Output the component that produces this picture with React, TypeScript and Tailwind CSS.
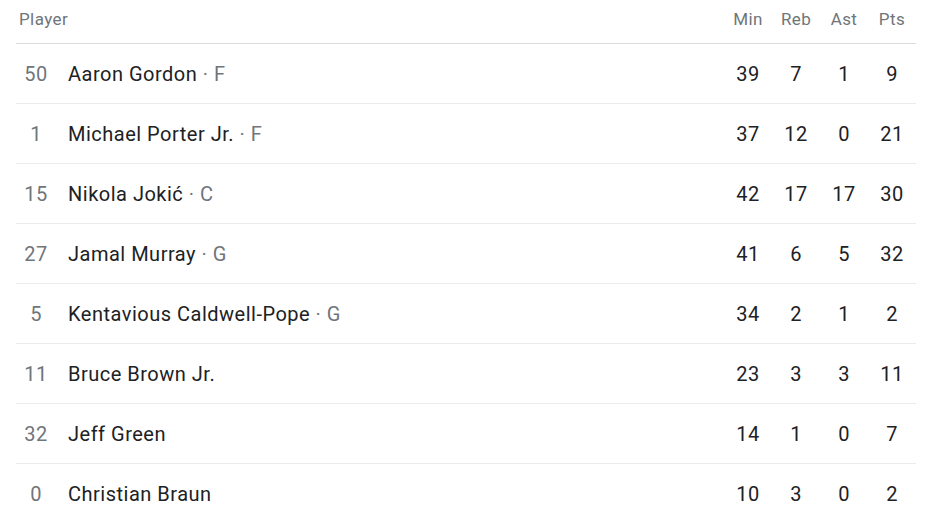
const players = [
  { num: '50', name: 'Aaron Gordon', pos: 'F', min: 39, reb: 7, ast: 1, pts: 9 },
  { num: '1', name: 'Michael Porter Jr.', pos: 'F', min: 37, reb: 12, ast: 0, pts: 21 },
  { num: '15', name: 'Nikola Jokić', pos: 'C', min: 42, reb: 17, ast: 17, pts: 30 },
  { num: '27', name: 'Jamal Murray', pos: 'G', min: 41, reb: 6, ast: 5, pts: 32 },
  { num: '5', name: 'Kentavious Caldwell-Pope', pos: 'G', min: 34, reb: 2, ast: 1, pts: 2 },
  { num: '11', name: 'Bruce Brown Jr.', pos: '', min: 23, reb: 3, ast: 3, pts: 11 },
  { num: '32', name: 'Jeff Green', pos: '', min: 14, reb: 1, ast: 0, pts: 7 },
  { num: '0', name: 'Christian Braun', pos: '', min: 10, reb: 3, ast: 0, pts: 2 },
];

export default function App() {
  return (
    <div className="w-[932px] h-[514px] overflow-hidden bg-white" style={{ fontFamily: 'Roboto, "Liberation Sans", sans-serif' }}>
      <div className="ml-4 w-[900px]">
        {/* Header */}
        <div className="flex items-center h-[44px] pb-[3px] border-b border-[#dadce0] text-[17px] tracking-[0.4px] text-[#70757a]">
          <div className="flex-1 pl-[3px]">Player</div>
          <div className="w-12 text-center">Min</div>
          <div className="w-12 text-center">Reb</div>
          <div className="w-12 text-center">Ast</div>
          <div className="w-12 text-center">Pts</div>
        </div>

        {players.map((p) => (
          <div key={p.name} className="flex items-center h-[60px] border-b border-[#ebebeb] text-[20px] tracking-[0.5px] text-[#202124]">
            <div className="w-10 text-center text-[#70757a]">{p.num}</div>
            <div className="flex-1 pl-3">
              {p.name}
              {p.pos && <span className="text-[#70757a]"> · {p.pos}</span>}
            </div>
            <div className="w-12 text-center">{p.min}</div>
            <div className="w-12 text-center">{p.reb}</div>
            <div className="w-12 text-center">{p.ast}</div>
            <div className="w-12 text-center">{p.pts}</div>
          </div>
        ))}
      </div>
    </div>
  );
}
